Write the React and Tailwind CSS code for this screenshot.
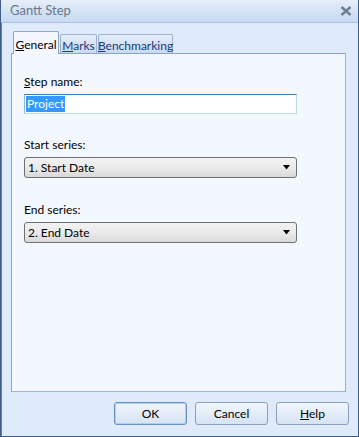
import React from "react";

const font = { fontFamily: 'Lato, "Liberation Sans", Arial, sans-serif' };

function Tab({ label, hot, active, w }) {
  const rest = label.slice(1);
  if (active) {
    return (
      <div className={"relative z-10 -mb-px flex h-[23px] shrink-0 items-start justify-center rounded-t-[2px] border border-b-0 border-[#8ea4c6] bg-[#f4f8fe] pt-[4px] text-[12px] text-black " + w}>
        <span>
          <span className="underline">{hot}</span>
          {rest}
        </span>
      </div>
    );
  }
  return (
    <div className={"flex h-[19px] shrink-0 items-start justify-center rounded-t-[2px] border border-b-0 border-[#9cb1d2] bg-gradient-to-b from-[#e4edf9] to-[#c9daf1] pt-[2px] text-[12px] text-[#1c3a78] " + w}>
      <span>
        <span className="underline">{hot}</span>
        {rest}
      </span>
    </div>
  );
}

function Select({ value }) {
  return (
    <div className="flex h-[21px] w-[273px] items-center justify-between rounded-[3px] border border-[#707070] bg-gradient-to-b from-[#f2f2f2] via-[#ebebeb] to-[#d9d9d9] pl-[3px] pr-[5px] text-[12px] text-black">
      <span>{value}</span>
      <svg width="8" height="5" viewBox="0 0 8 5">
        <path d="M0 0h7L3.5 4.5z" fill="#000" />
      </svg>
    </div>
  );
}

function Button({ children, focused }) {
  return (
    <div
      className={
        "flex h-[23px] w-[73px] items-center justify-center rounded-[3px] border bg-gradient-to-b from-[#f1f6fd] to-[#d6e3f4] text-[12px] text-black " +
        (focused
          ? "border-[#6a8fc4] shadow-[inset_0_0_0_1px_#a9d3f3]"
          : "border-[#8a9fbe]")
      }
    >
      {children}
    </div>
  );
}

export default function App() {
  return (
    <div style={font} className="flex h-[437px] w-[359px] flex-col border border-t-0 border-[#3e5d88] bg-[#dfeafb]">
      {/* title bar */}
      <div className="flex h-[23px] items-center justify-between border-b border-[#a9c3e6] bg-gradient-to-b from-[#e6eefa] via-[#d5e3f5] to-[#c7daf1] pl-[9px] pr-[6px]">
        <span className="text-[13px] text-[#69788b]">Gantt Step</span>
        <svg width="12" height="10" viewBox="0 0 12 10">
          <path d="M1.5 1l9 8M10.5 1l-9 8" stroke="#6e7f94" strokeWidth="2.4" />
        </svg>
      </div>

      <div className="flex flex-1 flex-col border-l border-[#5a83bb] pl-[9px] pr-[12px] pt-[8px]">
        {/* tabs */}
        <div className="flex items-end gap-[1px] pl-[2px]">
          <Tab label="General" hot="G" active w="w-[46px]" />
          <Tab label="Marks" hot="M" w="w-[37px]" />
          <Tab label="Benchmarking" hot="B" w="w-[75px]" />
        </div>

        {/* panel */}
        <div className="flex h-[339px] flex-col border border-[#8ea4c6] border-b-[#a2b3cd] border-r-[#9fb0cb] bg-[#f3f7fe] pl-[12px] pt-[21px] text-[12px] text-black">
          <div className="leading-[14px]">
            <span className="underline">S</span>tep name:
          </div>
          <div className="mt-[5px] flex h-[20px] w-[273px] items-center border border-[#3d7bb0] border-b-[#b8dbee] border-r-[#b8dbee] border-l-[#8eb7d8] bg-white pl-[1px]">
            <span className="bg-[#3399ff] px-[1px] leading-[16px] text-white">Project</span>
          </div>

          <div className="mt-[24px] leading-[14px]">Start series:</div>
          <div className="mt-[5px]">
            <Select value="1. Start Date" />
          </div>

          <div className="mt-[25px] leading-[14px]">End series:</div>
          <div className="mt-[5px]">
            <Select value="2. End Date" />
          </div>
        </div>

        {/* buttons */}
        <div className="-mr-[3px] mt-[10px] flex justify-end gap-[8px]">
          <Button focused>OK</Button>
          <Button>Cancel</Button>
          <Button>
            <span>
              <span className="underline">H</span>elp
            </span>
          </Button>
        </div>
      </div>
    </div>
  );
}
